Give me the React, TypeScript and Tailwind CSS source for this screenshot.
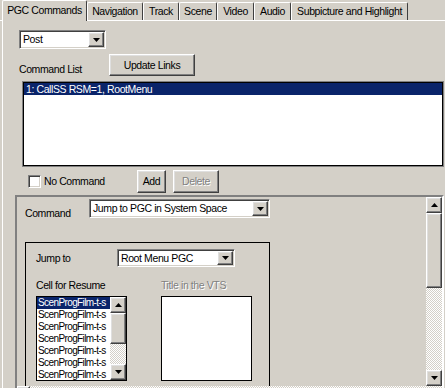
import type { ReactNode } from "react";

const raised =
  "border border-t-white border-l-white border-r-[#404040] border-b-[#404040] shadow-[inset_-1px_-1px_0_#808080,inset_1px_1px_0_#dfdfdf] bg-[#d4d0c8]";
const sunken =
  "border border-t-[#808080] border-l-[#808080] border-r-white border-b-white shadow-[inset_1px_1px_0_#404040,inset_-1px_-1px_0_#d4d0c8]";
const hatch =
  "bg-[repeating-conic-gradient(#ffffff_0_25%,#d4d0c8_0_50%)] bg-[length:2px_2px]";

const tabs = [
  { label: "Navigation", w: 56 },
  { label: "Track", w: 36 },
  { label: "Scene", w: 38 },
  { label: "Video", w: 37 },
  { label: "Audio", w: 37 },
  { label: "Subpicture and Highlight", w: 117 },
];

function Arrow({ down = false }: { down?: boolean }) {
  return (
    <svg width="7" height="4" viewBox="0 0 7 4">
      <polygon points={down ? "0,0 7,0 3.5,4" : "0,4 7,4 3.5,0"} fill="#000" />
    </svg>
  );
}

function ComboBox({ value, w, h = 19 }: { value: string; w: number; h?: number }) {
  return (
    <div
      className={`${sunken} bg-white flex items-stretch p-[1px] shrink-0`}
      style={{ width: w, height: h }}
    >
      <div className="flex-1 flex items-center pl-[2px] overflow-hidden whitespace-nowrap">
        {value}
      </div>
      <div className={`${raised} w-[16px] flex items-center justify-center`}>
        <Arrow down />
      </div>
    </div>
  );
}

function Button({
  children,
  w,
  h = 23,
  disabled = false,
}: {
  children: ReactNode;
  w: number;
  h?: number;
  disabled?: boolean;
}) {
  return (
    <div
      className={`${raised} flex items-center justify-center shrink-0`}
      style={{ width: w, height: h }}
    >
      {disabled ? <Disabled>{children}</Disabled> : children}
    </div>
  );
}

function Disabled({ children }: { children: ReactNode }) {
  return <span className="text-[#808080] [text-shadow:1px_1px_0_#ffffff]">{children}</span>;
}

function VScroll({ thumb }: { thumb: number }) {
  return (
    <div className="w-[16px] shrink-0 flex flex-col">
      <div className={`${raised} h-[16px] shrink-0 flex items-center justify-center`}>
        <Arrow />
      </div>
      <div className={`${raised} shrink-0`} style={{ height: thumb }} />
      <div className={`${hatch} flex-1`} />
      <div className={`${raised} h-[16px] shrink-0 flex items-center justify-center`}>
        <Arrow down />
      </div>
    </div>
  );
}

export default function App() {
  return (
    <div className="w-[445px] h-[388px] overflow-hidden bg-[#d4d0c8] font-['Liberation_Sans',Arial,sans-serif] text-[10.5px] tracking-[-0.4px] leading-[13px] text-black">
      {/* tab strip */}
      <div className="flex items-end h-[21px] pl-[2px] border-b border-white">
        <div className="relative z-10 -mb-px h-[21px] w-[85px] bg-[#d4d0c8] border-l border-t border-white border-r border-r-[#404040] rounded-t-[2px] flex items-center justify-center pb-[2px]">
          PGC Commands
        </div>
        {tabs.map((t) => (
          <div
            key={t.label}
            className="h-[18px] border-l border-t border-white border-r border-r-[#404040] rounded-t-[2px] flex items-center justify-center shrink-0"
            style={{ width: t.w }}
          >
            {t.label}
          </div>
        ))}
      </div>

      {/* tab panel */}
      <div className="ml-[2px] h-[367px] border-l border-white flex flex-col [&>*]:shrink-0">
        <div className="mt-[9px] ml-[16px]">
          <ComboBox value="Post" w={87} />
        </div>

        <div className="mt-[5px] ml-[16px] flex items-end h-[22px]">
          <div className="w-[90px]">Command List</div>
          <Button w={86} h={22}>
            Update Links
          </Button>
        </div>

        <div className="mt-[6px] ml-[20px] w-[420px] h-[84px] bg-white border border-black shadow-[0_0_0_1px_#808080]">
          <div className="h-[12px] bg-[#0a246a] text-white pl-[2px] leading-[12px]">
            1: CallSS RSM=1, RootMenu
          </div>
        </div>

        <div className="mt-[4px] ml-[25px] flex items-center h-[23px]">
          <div className="w-[109px] flex items-center">
            <div className={`${sunken} bg-white w-[13px] h-[13px]`} />
            <span className="ml-[3px]">No Command</span>
          </div>
          <Button w={29}>Add</Button>
          <div className="w-[7px]" />
          <Button w={46} disabled>
            Delete
          </Button>
        </div>

        {/* scrolled pane */}
        <div className="mt-[2px] ml-[12px] w-[429px] h-[212px] border-2 border-t-[#808080] border-l-[#808080] border-r-white border-b-white flex flex-col [&>*]:shrink-0">
          <div className="h-[189px] flex">
            <div className="w-[409px] overflow-hidden">
              <div className="mt-[2px] ml-[8px] flex h-[19px]">
                <div className="w-[64px] pt-[8px]">Command</div>
                <ComboBox value="Jump to PGC in System Space" w={181} />
              </div>

              <div className="mt-[24px] ml-[8px] w-[245px] h-[160px] border border-black">
                <div className="mt-[6px] ml-[10px] flex items-center h-[18px]">
                  <div className="w-[81px]">Jump to</div>
                  <ComboBox value="Root Menu PGC" w={118} h={18} />
                </div>

                <div className="mt-[12px] ml-[10px] flex">
                  <div className="w-[125px]">Cell for Resume</div>
                  <Disabled>Title in the VTS</Disabled>
                </div>

                <div className="mt-[4px] ml-[10px] flex">
                  <div className="w-[91px] h-[85px] bg-white border border-black flex shrink-0">
                    <div className="w-[73px] overflow-hidden whitespace-nowrap text-[10px] tracking-[-0.6px]">
                      {Array.from({ length: 7 }).map((_, i) => (
                        <div
                          key={i}
                          className={`h-[12px] leading-[12px] pl-[1px] ${
                            i === 0 ? "bg-[#0a246a] text-white" : ""
                          }`}
                        >
                          ScenProgFilm-t-s
                        </div>
                      ))}
                    </div>
                    <VScroll thumb={31} />
                  </div>
                  <div className="ml-[34px] w-[91px] h-[85px] bg-white border border-black shrink-0" />
                </div>
              </div>
            </div>
            <VScroll thumb={75} />
          </div>
          <div className="flex h-[16px]">
            <div className={`${raised} w-[13px]`} />
            <div className={`${hatch} flex-1`} />
          </div>
        </div>
      </div>
    </div>
  );
}
